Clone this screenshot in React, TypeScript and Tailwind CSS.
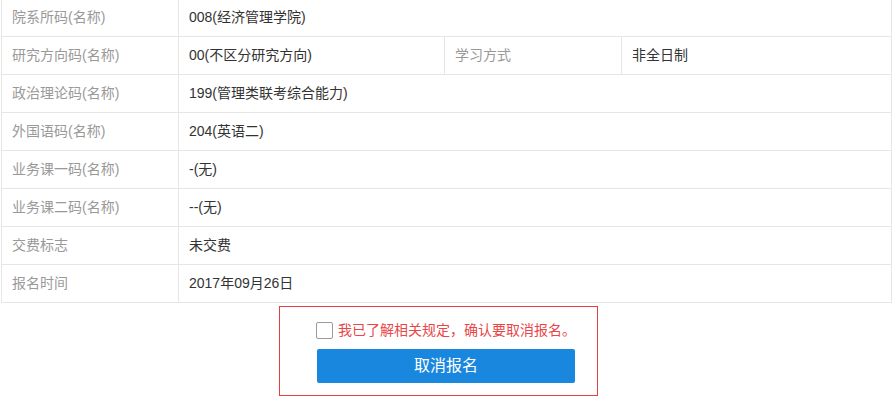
import { useState } from "react";

const rows: { label: string; value: string; extra?: { label: string; value: string } }[] = [
  { label: "院系所码(名称)", value: "008(经济管理学院)" },
  { label: "研究方向码(名称)", value: "00(不区分研究方向)", extra: { label: "学习方式", value: "非全日制" } },
  { label: "政治理论码(名称)", value: "199(管理类联考综合能力)" },
  { label: "外国语码(名称)", value: "204(英语二)" },
  { label: "业务课一码(名称)", value: "-(无)" },
  { label: "业务课二码(名称)", value: "--(无)" },
  { label: "交费标志", value: "未交费" },
  { label: "报名时间", value: "2017年09月26日" },
];

export default function App() {
  const [agreed, setAgreed] = useState(false);

  return (
    <div
      className="w-[893px] h-[400px] overflow-hidden bg-white text-[14px]"
      style={{ fontFamily: '"Liberation Sans", "Noto Sans CJK SC", sans-serif' }}
    >
      <div className="-mt-[2px] pl-[1px]">
        <table className="w-[890px] table-fixed border-collapse">
          <colgroup>
            <col className="w-[177px]" />
            <col className="w-[266px]" />
            <col className="w-[177px]" />
            <col className="w-[270px]" />
          </colgroup>
          <tbody>
            {rows.map((r) => (
              <tr key={r.label} className="h-[38px]">
                <td className="border border-[#e6e6e6] px-[10px] text-[#999]">{r.label}</td>
                {r.extra ? (
                  <>
                    <td className="border border-[#e6e6e6] px-[10px] text-[#333]">{r.value}</td>
                    <td className="border border-[#e6e6e6] px-[10px] text-[#999]">{r.extra.label}</td>
                    <td className="border border-[#e6e6e6] px-[10px] text-[#333]">{r.extra.value}</td>
                  </>
                ) : (
                  <td colSpan={3} className="border border-[#e6e6e6] px-[10px] text-[#333]">
                    {r.value}
                  </td>
                )}
              </tr>
            ))}
          </tbody>
        </table>
      </div>

      <div className="ml-[279px] mt-[3px] flex h-[90px] w-[319px] flex-col items-start border border-[#e53e3e] pl-[36px] pt-[13px]">
        <label className="flex h-[20px] cursor-pointer items-center gap-[5px] text-[#e8474a]">
          <span
            onClick={() => setAgreed(!agreed)}
            className="flex h-[17px] w-[17px] items-center justify-center rounded-[2px] border border-[#9a9a9a] bg-white"
          >
            {agreed && <span className="text-[12px] leading-none text-[#1a87de]">✓</span>}
          </span>
          我已了解相关规定，确认要取消报名。
        </label>
        <button className="ml-[1px] mt-[9px] h-[34px] w-[258px] rounded-[2px] bg-[#1a87de] text-[16px] text-white">
          取消报名
        </button>
      </div>
    </div>
  );
}
